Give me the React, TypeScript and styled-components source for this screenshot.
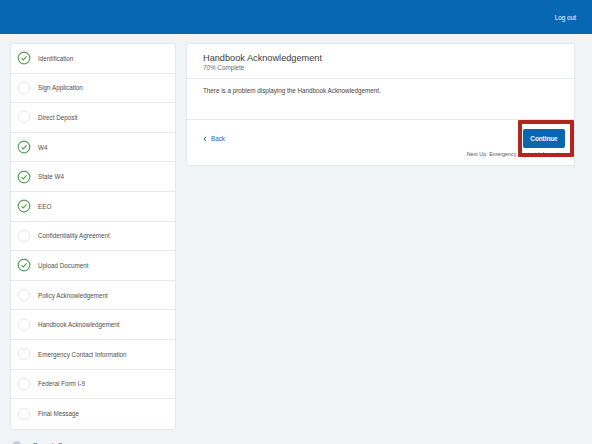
import React from 'react'
import styled, { createGlobalStyle } from 'styled-components'

const GlobalStyle = createGlobalStyle`
  html, body {
    margin: 0;
    padding: 0;
    height: 100%;
    overflow: hidden;
    background: #f1f4f7;
    font-family: "Liberation Sans", Arial, sans-serif;
  }
`

const TopBar = styled.header`
  height: 34px;
  background: #0867b3;
  display: flex;
  align-items: center;
  justify-content: flex-end;
  padding-right: 16px;
`

const LogOut = styled.a`
  color: #ffffff;
  font-size: 6.4px;
  cursor: pointer;
`

const Page = styled.div`
  display: flex;
  align-items: flex-start;
  gap: 10px;
  padding: 9px 17px 0 10px;
`

const SideColumn = styled.div`
  width: 166px;
  flex-shrink: 0;
  display: flex;
  flex-direction: column;
`

const Card = styled.div`
  background: #ffffff;
  border: 1px solid #e3e7eb;
  border-radius: 2px;
`

const StepRow = styled.div`
  box-sizing: border-box;
  height: 29.6px;
  display: flex;
  align-items: center;
  padding-left: 6px;
  gap: 7px;
  border-bottom: 1px solid #e8ebee;
  &:last-child {
    border-bottom: none;
  }
`

const StepLabel = styled.span`
  font-size: 6.3px;
  color: #4f4f4f;
`

const NextSection = styled.div`
  display: flex;
  align-items: center;
  gap: 12px;
  padding: 11px 0 0 2px;
`

const GreyDot = styled.span`
  width: 9px;
  height: 9px;
  border-radius: 50%;
  background: #c9ced4;
`

const MainCard = styled(Card)`
  position: relative;
  flex: 1;
`

const CardHeader = styled.div`
  padding: 9px 16px 6px;
  border-bottom: 1px solid #e8ebee;
`

const Title = styled.div`
  font-size: 9.2px;
  line-height: 11px;
  color: #3b3b3b;
`

const Subtitle = styled.div`
  font-size: 6.3px;
  line-height: 8px;
  color: #6b6b6b;
`

const CardBody = styled.div`
  padding: 8px 16px 24px;
  font-size: 6.3px;
  line-height: 8px;
  color: #444;
  border-bottom: 1px solid #e8ebee;
`

const CardFooter = styled.div`
  padding: 9px 9px 7px 16px;
  display: flex;
  flex-direction: column;
  gap: 2px;
`

const ActionRow = styled.div`
  display: flex;
  align-items: center;
  justify-content: space-between;
`

const BackLink = styled.a`
  display: flex;
  align-items: center;
  gap: 4px;
  color: #2765a8;
  font-size: 6.3px;
  cursor: pointer;
`

const PrimaryButton = styled.button`
  width: 42px;
  height: 19px;
  border: none;
  border-radius: 2px;
  background: #0b66b1;
  color: #ffffff;
  font-family: "Liberation Sans", Arial, sans-serif;
  font-size: 6.3px;
  font-weight: 700;
  padding: 0;
`

const NextUp = styled.div`
  text-align: right;
  font-size: 5.4px;
  line-height: 8px;
  color: #555;
`

const Highlight = styled.div`
  position: absolute;
  left: 331px;
  top: 76px;
  width: 56px;
  height: 37px;
  box-sizing: border-box;
  border: 4.5px solid #b2271d;
  border-radius: 1px;
`

const steps: { label: string; done: boolean }[] = [
  { label: 'Identification', done: true },
  { label: 'Sign Application', done: false },
  { label: 'Direct Deposit', done: false },
  { label: 'W4', done: true },
  { label: 'State W4', done: true },
  { label: 'EEO', done: true },
  { label: 'Confidentiality Agreement', done: false },
  { label: 'Upload Document', done: true },
  { label: 'Policy Acknowledgement', done: false },
  { label: 'Handbook Acknowledgement', done: false },
  { label: 'Emergency Contact Information', done: false },
  { label: 'Federal Form I-9', done: false },
  { label: 'Final Message', done: false },
]

const StepIcon = ({ done }: { done: boolean }) =>
  done ? (
    <svg width="14" height="14" viewBox="0 0 14 14">
      <circle cx="7" cy="7" r="5.8" fill="none" stroke="#5c9e5c" strokeWidth="1.2" />
      <polyline points="4.5,7.2 6.3,8.9 9.6,5.4" fill="none" stroke="#5c9e5c" strokeWidth="1.2" />
    </svg>
  ) : (
    <svg width="14" height="14" viewBox="0 0 14 14">
      <circle cx="7" cy="7" r="5.8" fill="none" stroke="#e4e6e8" strokeWidth="1" />
    </svg>
  )

export default function App() {
  return (
    <>
      <GlobalStyle />
      <TopBar>
        <LogOut>Log out</LogOut>
      </TopBar>
      <Page>
        <SideColumn>
          <Card>
            {steps.map((step) => (
              <StepRow key={step.label}>
                <StepIcon done={step.done} />
                <StepLabel>{step.label}</StepLabel>
              </StepRow>
            ))}
          </Card>
          <NextSection>
            <GreyDot />
            <StepLabel>Records Summary</StepLabel>
          </NextSection>
        </SideColumn>
        <MainCard>
          <CardHeader>
            <Title>Handbook Acknowledgement</Title>
            <Subtitle>70% Complete</Subtitle>
          </CardHeader>
          <CardBody>There is a problem displaying the Handbook Acknowledgement.</CardBody>
          <CardFooter>
            <ActionRow>
              <BackLink>
                <svg width="4" height="6" viewBox="0 0 4 6">
                  <polyline points="3,0.8 1,3 3,5.2" fill="none" stroke="#2765a8" strokeWidth="1" />
                </svg>
                Back
              </BackLink>
              <PrimaryButton>Continue</PrimaryButton>
            </ActionRow>
            <NextUp>Next Up: Emergency Contact Information</NextUp>
          </CardFooter>
          <Highlight />
        </MainCard>
      </Page>
    </>
  )
}
